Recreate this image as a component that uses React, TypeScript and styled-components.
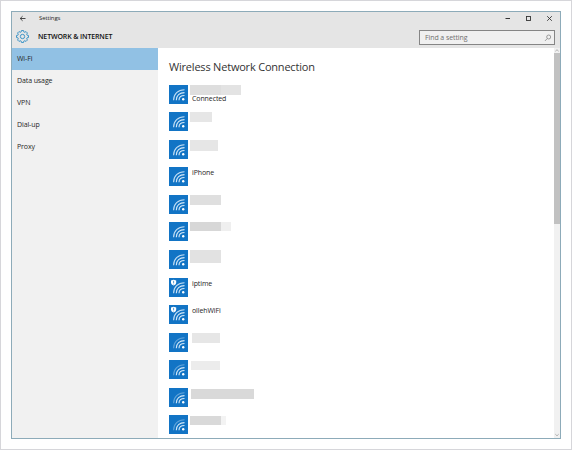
import React from "react";
import styled, { createGlobalStyle } from "styled-components";

const GlobalStyle = createGlobalStyle`
  * { box-sizing: border-box; }
  body { margin: 0; background: #fff; font-family: "Open Sans", "Noto Sans", sans-serif; color: #262626; }
`;

const Frame = styled.div`
  width: 572px;
  height: 450px;
  padding: 10px;
  border: 1px solid #d6d6da;
  background: #fff;
`;

const Window = styled.div`
  width: 550px;
  height: 428px;
  display: flex;
  flex-direction: column;
  border: 1px solid #8dabb9;
  overflow: hidden;
`;

const Header = styled.header`
  flex: none;
  height: 36px;
  background: #e5e5e5;
`;

const TitleBar = styled.div`
  height: 13px;
  display: flex;
  align-items: center;
  padding: 0 7px 0 7px;
`;

const TitleText = styled.span`
  margin-left: 12px;
  flex: 1;
  font-size: 6px;
  line-height: 13px;
  letter-spacing: -0.12px;
`;

const WindowControls = styled.div`
  display: flex;
  align-items: center;
  gap: 14px;
`;

const Toolbar = styled.div`
  height: 23px;
  display: flex;
  align-items: center;
  padding: 0 5px 0 4px;
`;

const PageName = styled.h1`
  margin: 1px 0 0 9px;
  flex: 1;
  font-size: 7px;
  line-height: 12px;
  font-weight: 600;
  letter-spacing: -0.12px;
  color: #111;
`;

const SearchBox = styled.div`
  width: 136px;
  height: 15px;
  margin-top: 2px;
  border: 1px solid #858585;
  background: #f0f0f0;
  display: flex;
  align-items: center;
  justify-content: space-between;
  padding: 0 2px 0 5px;
  font-size: 7px;
  line-height: 12px;
  letter-spacing: -0.08px;
  color: #707070;
`;

const Body = styled.div`
  flex: 1;
  min-height: 0;
  display: flex;
`;

const Sidebar = styled.nav`
  width: 146px;
  background: #f1f1f1;
`;

const NavItem = styled.div<{ $active?: boolean }>`
  height: 22px;
  padding-left: 5px;
  font-size: 7px;
  line-height: 22px;
  letter-spacing: -0.1px;
  background: ${(p) => (p.$active ? "#91c1e4" : "transparent")};
`;

const Content = styled.main`
  flex: 1;
  min-width: 0;
  padding: 11px 0 0 11px;
  overflow: hidden;
`;

const Heading = styled.h2`
  margin: 0 0 9.7px;
  font-size: 11px;
  line-height: 16px;
  font-weight: 400;
  letter-spacing: -0.2px;
  color: #333;
`;

const NetworkRow = styled.div`
  height: 27.55px;
  display: flex;
  align-items: flex-start;
`;

const NetworkIcon = styled.svg`
  width: 19px;
  height: 19px;
  flex: none;
  display: block;
`;

const NetworkInfo = styled.div`
  display: flex;
  flex-direction: column;
`;

const NetworkName = styled.span`
  margin: 0 0 0 4px;
  font-size: 7px;
  line-height: 11px;
  letter-spacing: -0.1px;
`;

const Status = styled(NetworkName)`
  line-height: 10px;
  margin-top: -1px;
`;

const MaskedName = styled.div<{ $left: number; $top: number }>`
  display: flex;
  margin: ${(p) => p.$top}px 0 0 ${(p) => p.$left}px;
`;

const MaskPart = styled.span<{ $w: number; $h: number; $color: string }>`
  width: ${(p) => p.$w}px;
  height: ${(p) => p.$h}px;
  background: ${(p) => p.$color};
`;

const Scrollbar = styled.div`
  width: 6px;
  display: flex;
  flex-direction: column;
  align-items: center;
  background: #f1f1f1;
`;

const ScrollThumb = styled.div`
  width: 6px;
  height: 171px;
  background: #c1c1c1;
`;

const ScrollSpace = styled.div`
  flex: 1;
`;

type Part = [width: number, color: string];

interface Network {
  name?: string;
  status?: string;
  open?: boolean;
  weak?: boolean;
  left?: number;
  top?: number;
  height?: number;
  parts?: Part[];
}

const networks: Network[] = [
  { status: "Connected", height: 10, parts: [[31, "#dedede"], [20, "#e3e3e3"]] },
  { height: 10, parts: [[22, "#e6e6e6"]] },
  { height: 11, parts: [[28, "#e6e6e6"]] },
  { name: "iPhone" },
  { height: 10, parts: [[31, "#dfdfdf"]] },
  { height: 9, parts: [[31, "#d7d7d7"], [10, "#efefef"]] },
  { height: 13, parts: [[31, "#e2e2e2"]] },
  { name: "iptime", open: true },
  { name: "ollehWiFi", open: true },
  { left: 4, height: 10, parts: [[28, "#e6e6e6"]], weak: true },
  { left: 3, top: 1, height: 9, parts: [[29, "#ececec"]], weak: true },
  { left: 3, top: 1, height: 10, parts: [[63, "#d9d9d9"]], weak: true },
  { top: 1, height: 9, parts: [[31, "#d9d9d9"], [5, "#f3f3f3"]], weak: true },
];

const sections = ["Wi-Fi", "Data usage", "VPN", "Dial-up", "Proxy"];

function WifiIcon({ open, weak }: { open?: boolean; weak?: boolean }) {
  return (
    <NetworkIcon viewBox="0 0 19 19" fill="none">
      <rect width="19" height="19" fill="#1274c5" />
      <g stroke="#d5e9f8" strokeWidth="1.1">
        <path d="M4.6 15.2C4.6 9 9 4.7 15.5 4.7" opacity={weak ? 0.4 : 0.9} />
        <path d="M7.3 15.2C7.3 10.7 10.6 7.6 15.5 7.6" />
        <path d="M10 15.2C10 12.3 12 10.5 15.5 10.5" />
      </g>
      <circle cx="14.2" cy="14.3" r="1.2" fill="#fff" />
      {open && (
        <>
          <path d="M2 2.6 4.6 1.7 7.2 2.6V4.6C7.2 6.2 6 7 4.6 7.6 3.2 7 2 6.2 2 4.6Z" fill="#fff" />
          <path d="M4.6 2.8V5M4.6 5.6V6.4" stroke="#3184c6" strokeWidth="0.8" />
        </>
      )}
    </NetworkIcon>
  );
}

const gearPath = (() => {
  const points: string[] = [];
  for (let i = 0; i < 8; i++) {
    const tooth: [number, number][] = [[-16, 4.4], [-10, 5.6], [10, 5.6], [16, 4.4]];
    for (const [offset, radius] of tooth) {
      const angle = ((i * 45 + offset) * Math.PI) / 180;
      points.push(`${(6 + radius * Math.cos(angle)).toFixed(2)} ${(6 + radius * Math.sin(angle)).toFixed(2)}`);
    }
  }
  return `M${points.join("L")}Z`;
})();

export default function App() {
  return (
    <>
      <GlobalStyle />
      <Frame>
        <Window>
          <Header>
            <TitleBar>
              <svg width="8" height="7" viewBox="0 0 8 7" fill="none" stroke="#333" strokeWidth="0.9">
                <path d="M6.5 3.5H1.3M3.6 1.2 1.2 3.5 3.6 5.8" />
              </svg>
              <TitleText>Settings</TitleText>
              <WindowControls>
                <svg width="7" height="7" viewBox="0 0 7 7" stroke="#333" strokeWidth="1">
                  <path d="M1.5 3.5H6" />
                </svg>
                <svg width="7" height="7" viewBox="0 0 7 7" fill="none" stroke="#333" strokeWidth="0.9">
                  <rect x="1.5" y="1.5" width="4" height="4" />
                </svg>
                <svg width="7" height="7" viewBox="0 0 7 7" stroke="#333" strokeWidth="0.9">
                  <path d="M1.2 1.2 5.8 5.8M5.8 1.2 1.2 5.8" />
                </svg>
              </WindowControls>
            </TitleBar>
            <Toolbar>
              <svg width="13" height="13" viewBox="0 0 12 12" fill="none" stroke="#3b93c6" strokeWidth="0.9">
                <path d={gearPath} strokeLinejoin="round" />
                <circle cx="6" cy="6" r="2" />
              </svg>
              <PageName>NETWORK &amp; INTERNET</PageName>
              <SearchBox>
                Find a setting
                <svg width="8" height="8" viewBox="0 0 8 8" fill="none" stroke="#858585" strokeWidth="0.8">
                  <circle cx="4.7" cy="3" r="2" />
                  <path d="M3.3 4.5 1 6.9" />
                </svg>
              </SearchBox>
            </Toolbar>
          </Header>
          <Body>
            <Sidebar>
              {sections.map((label, i) => (
                <NavItem key={label} $active={i === 0}>{label}</NavItem>
              ))}
            </Sidebar>
            <Content>
              <Heading>Wireless Network Connection</Heading>
              {networks.map((n, i) => (
                <NetworkRow key={i}>
                  <WifiIcon open={n.open} weak={n.weak} />
                  <NetworkInfo>
                    {n.name && <NetworkName>{n.name}</NetworkName>}
                    {n.parts && (
                      <MaskedName $left={n.left ?? 2} $top={n.top ?? 0}>
                        {n.parts.map(([w, color], k) => (
                          <MaskPart key={k} $w={w} $h={n.height ?? 10} $color={color} />
                        ))}
                      </MaskedName>
                    )}
                    {n.status && <Status>{n.status}</Status>}
                  </NetworkInfo>
                </NetworkRow>
              ))}
            </Content>
            <Scrollbar>
              <svg width="6" height="5" viewBox="0 0 6 5" fill="none" stroke="#a0a0a0" strokeWidth="0.8">
                <path d="M1.3 3.3 3 1.7 4.7 3.3" />
              </svg>
              <ScrollThumb />
              <ScrollSpace />
              <svg width="6" height="6" viewBox="0 0 6 6" fill="none" stroke="#a0a0a0" strokeWidth="0.8">
                <path d="M1.3 2.2 3 3.8 4.7 2.2" />
              </svg>
            </Scrollbar>
          </Body>
        </Window>
      </Frame>
    </>
  );
}
